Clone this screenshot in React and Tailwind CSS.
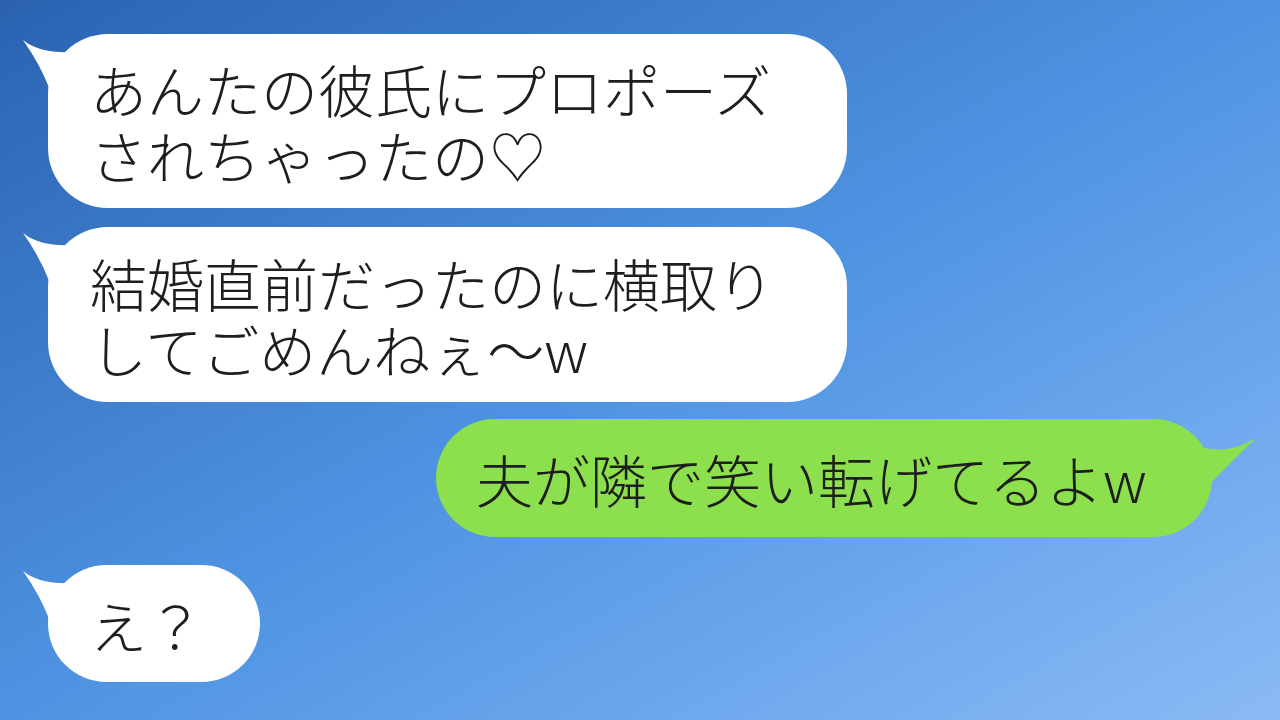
import React from "react";

const font = {
  fontFamily: '"Noto Sans CJK JP", "Noto Sans", sans-serif',
};

// little curved tail at the top-left of an incoming bubble
const LeftTail = ({ color }) => (
  <svg
    className="absolute left-[-26px] top-0"
    width="70"
    height="56"
    viewBox="0 0 70 56"
  >
    <path d="M1 6 Q18 20 52 18 L52 56 L28 56 Q18 30 1 6 Z" fill={color} />
  </svg>
);

// tail at the top-right of an outgoing bubble
const RightTail = ({ color }) => (
  <svg
    className="absolute right-[-44px] top-0"
    width="90"
    height="70"
    viewBox="0 0 90 70"
  >
    <path d="M90 19 Q62 36 35 28 L20 28 L20 65 L44 65 Q62 46 90 19 Z" fill={color} />
  </svg>
);

const Bubble = ({ side = "left", color, className, children }) => (
  <div className={`relative ${className}`}>
    {side === "left" ? <LeftTail color={color} /> : <RightTail color={color} />}
    <div
      className="relative h-full rounded-[60px] text-[57px] leading-[66px] font-light text-[#1e1e1e] flex flex-col justify-center"
      style={{ ...font, backgroundColor: color }}
    >
      {children}
    </div>
  </div>
);

export default function App() {
  return (
    <div className="w-full h-[720px] overflow-hidden bg-[linear-gradient(to_bottom_right,#2a62b0_0%,#4e93e2_50%,#8abaf6_100%)]">
      <div className="flex flex-col pt-[34px]">
        <Bubble color="#ffffff" className="ml-[48px] w-[799px] h-[174px]">
          <div className="pl-[42px] whitespace-nowrap">
            あんたの彼氏にプロポーズ
          </div>
          <div className="pl-[42px] whitespace-nowrap">されちゃったの♡</div>
        </Bubble>

        <Bubble color="#ffffff" className="ml-[48px] mt-[19px] w-[799px] h-[175px]">
          <div className="pl-[42px] whitespace-nowrap">
            結婚直前だったのに横取り
          </div>
          <div className="pl-[42px] whitespace-nowrap">してごめんねぇ〜w</div>
        </Bubble>

        <Bubble
          side="right"
          color="#8ce04d"
          className="self-end mr-[68px] mt-[17px] w-[776px] h-[118px]"
        >
          <div className="pl-[40px] whitespace-nowrap">夫が隣で笑い転げてるよw</div>
        </Bubble>

        <Bubble color="#ffffff" className="ml-[48px] mt-[28px] w-[212px] h-[117px]">
          <div className="pl-[42px] whitespace-nowrap">え？</div>
        </Bubble>
      </div>
    </div>
  );
}
